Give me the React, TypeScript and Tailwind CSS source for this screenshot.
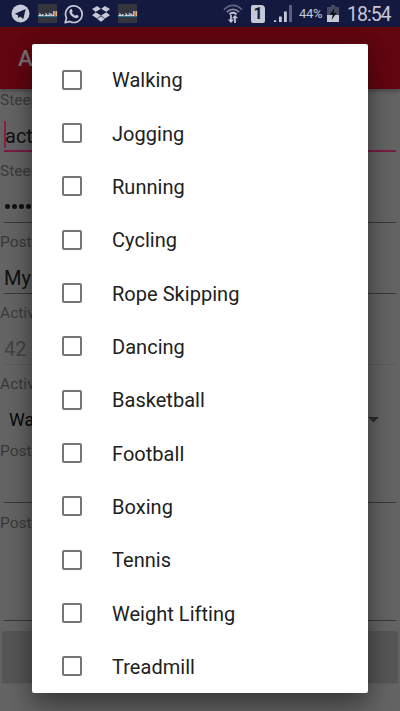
import type { ReactNode } from 'react';

const ACTIVITIES = [
  'Walking',
  'Jogging',
  'Running',
  'Cycling',
  'Rope Skipping',
  'Dancing',
  'Basketball',
  'Football',
  'Boxing',
  'Tennis',
  'Weight Lifting',
  'Treadmill',
];

const NewsIcon = () => (
  <div className="relative flex h-[19px] w-[19px] items-center justify-center bg-[#34353f]">
    <span
      dir="rtl"
      className="font-['DejaVu_Sans',sans-serif] text-[6.5px] leading-[10px] font-bold tracking-[-0.2px] whitespace-nowrap text-[#e2e4ea]"
    >
      الجديد
    </span>
    <div className="absolute top-[12px] left-0 h-px w-full bg-[#2a7890]" />
  </div>
);

const StatusBar = () => (
  <div className="flex h-[27px] items-center bg-[#141940] text-[#c6c8d6]">
    <div className="flex items-center pl-[11px]">
      {/* Telegram */}
      <svg width="19" height="19" viewBox="0 0 19 19" className="mr-[8px]">
        <circle cx="9.5" cy="9.5" r="9" fill="currentColor" />
        <path d="M3.8 9.7 14.7 5l-2.4 10-3.3-2.4-1.8 1.6-.3-3z" fill="#141940" />
      </svg>
      <NewsIcon />
      {/* WhatsApp */}
      <svg width="20" height="20" viewBox="0 0 20 20" className="ml-[7px]">
        <path
          d="M1.2 18.7 2.5 14A8.3 8.3 0 1 1 5.8 17.4z"
          fill="none"
          stroke="currentColor"
          strokeWidth="1.7"
          strokeLinejoin="round"
        />
        <path
          d="M6.7 5.2c.5-.2 1.1-.1 1.3.4l.6 1.6c.2.5-.6 1.1-.7 1.4.5 1.3 1.9 2.6 3.3 3.1.5 0 1-1.2 1.4-1l1.8 1c.5.3.1 1.3-.3 1.7-1 1-2.6.9-3.8.3-2.2-.9-4.5-3.3-4.9-5.5-.2-1.2.4-2.6 1.3-3z"
          fill="currentColor"
        />
      </svg>
      {/* Dropbox */}
      <svg width="18" height="16" viewBox="0 0 18 16" className="mr-[8px] ml-[8px]" fill="currentColor">
        <path d="M5.2 0 9 3 3.8 6.1 0 3.1zM12.8 0 9 3l5.2 3.1 3.8-3zM0 9.2l3.8-3L9 9.3 5.2 12.4zM18 9.2l-3.8-3L9 9.3l3.8 3.1zM5.2 13.1 9 10.2l3.8 2.9L9 15.7z" />
        <path d="m3.8 6.1 5.2-3 5.2 3L9 9.3z" fill="#141940" />
      </svg>
      <NewsIcon />
    </div>
    <div className="ml-auto flex items-center pr-[9px]">
      {/* Wifi */}
      <svg width="20" height="20" viewBox="0 0 20 20" fill="none" stroke="currentColor" className="mr-[8px]">
        <path d="M1 5.8C6-.1 14 -.1 19 5.8" strokeWidth="1.7" opacity=".45" />
        <path d="M3.8 8.2c3.6-3.9 8.8-3.9 12.4 0" strokeWidth="1.7" opacity=".6" />
        <path d="M6.5 10.3c2-2.1 5-2.1 7 0" strokeWidth="1.9" />
        <path d="M8 11v6M12 19v-6" strokeWidth="1.7" />
        <path d="M4.9 15.5h6.2L8 19zM8.9 14.2h6.2L12 11z" fill="currentColor" stroke="none" />
      </svg>
      {/* SIM */}
      <div className="mr-[9px] flex h-[18px] w-[14px] items-center justify-center rounded-[2px] rounded-tr-[4px] bg-[#c6c8d6] text-[16px] leading-none font-bold text-[#141940]">
        1
      </div>
      {/* Signal */}
      <svg width="18" height="17" viewBox="0 0 18 17" fill="currentColor" className="mr-[7px]">
        <path d="M0 15.2h2.2V17H0zM5 11.5h2.8V17H5zM10 6.5h2.8V17H10z" />
        <path d="M15 0h3v17h-3z" opacity=".4" />
      </svg>
      <span className="mr-[4px] w-[24px] pt-px text-[13px] tracking-[-0.3px]">44%</span>
      {/* Battery */}
      <svg width="12" height="17" viewBox="0 0 12 17" className="mr-[8px]">
        <path d="M4 0h4v2h4v15H0V2h4z" fill="#454962" />
        <path d="M0 10h12v7H0z" fill="#c6c8d6" />
        <path d="M7.5 3 2.8 9.8h3L4.5 15l5.1-7.2H6.5z" fill="#08090f" />
      </svg>
      <span className="w-[44px] pt-[2px] text-[19.5px] leading-none tracking-[-1px]">18:54</span>
    </div>
  </div>
);

interface FieldProps {
  label: string;
  className?: string;
  line?: string;
  children?: ReactNode;
}

const Field = ({
  label,
  className = 'h-[71.11px]',
  line = 'bg-[#383838] h-px',
  children,
}: FieldProps) => (
  <div className={`flex flex-col ${className}`}>
    <div className="h-[22px] text-[15.56px] leading-[22px] text-[#3a3a3a]">{label}</div>
    <div className="mx-[4px] flex flex-1 flex-col justify-between pb-[8.5px]">
      <div className="flex h-[38px] items-center pt-[11px] text-[20px] text-[#111111]">{children}</div>
      <div className={line} />
    </div>
  </div>
);

const ActivityForm = () => (
  <>
    <div className="relative flex h-[62px] items-center bg-[#620610] pt-px pl-[18px] text-[22.2px] font-medium text-[#777174] shadow-[0_2px_4px_rgba(0,0,0,0.3)]">
      Activity
    </div>
    <Field label="Steemit Username" line="bg-[#7a1c43] h-[2px]">
      <span className="-mt-[2px] h-[27px] w-[2px] shrink-0 bg-[#8b1e4b]" />
      <span className="-ml-[1px]">actifit</span>
    </Field>
    <Field label="Steemit Posting Key">
      <div className="flex gap-[2px] pl-px">
        {[0, 1, 2, 3, 4, 5, 6, 7].map((dot) => (
          <span key={dot} className="h-[5px] w-[5px] rounded-full bg-[#111111]" />
        ))}
      </div>
    </Field>
    <Field label="Post Title">My Post</Field>
    <Field label="Activity Count" line="bg-[#5b5b5b] h-px">
      <span className="text-[#424242]">42</span>
    </Field>
    <div className="h-[67px]">
      <div className="h-[22px] text-[15.56px] leading-[22px] text-[#3a3a3a]">Activity Type</div>
      <div className="flex h-[50px] items-center justify-between pr-[21px] pl-[9px] text-[17.8px] text-[#080808]">
        Walking
        <svg width="11" height="6" viewBox="0 0 11 6">
          <path d="M0 0h11L5.5 5.5z" fill="#2c2c2c" />
        </svg>
      </div>
    </div>
    <Field label="Post Content" />
    <Field label="Post Tags" className="h-[117.5px]" />
    <div className="mx-[2px] mt-[2px] h-[51px] rounded-[2px] bg-[#565656] shadow-[0_1px_1px_rgba(0,0,0,0.2)]" />
  </>
);

const ActivityDialog = () => (
  <div className="absolute top-[44px] left-[32px] h-[649px] w-[336px] rounded-[2px] bg-white py-[9px] shadow-[0_15px_28px_rgba(0,0,0,0.36),0_0_18px_rgba(0,0,0,0.18)]">
    {ACTIVITIES.map((activity) => (
      <div key={activity} className="flex h-[53.33px] items-center pl-[30px]">
        <span className="h-[20px] w-[20px] rounded-[2px] border-2 border-[#757575]" />
        <span className="pt-[1.6px] pl-[30px] text-[20px] leading-[24px] tracking-[0.03px] text-[#212121]">
          {activity}
        </span>
      </div>
    ))}
  </div>
);

export default function App() {
  return (
    <div className="relative h-[711px] w-[400px] overflow-hidden bg-[#646464] font-[Roboto,sans-serif]">
      <StatusBar />
      <ActivityForm />
      <ActivityDialog />
    </div>
  );
}
